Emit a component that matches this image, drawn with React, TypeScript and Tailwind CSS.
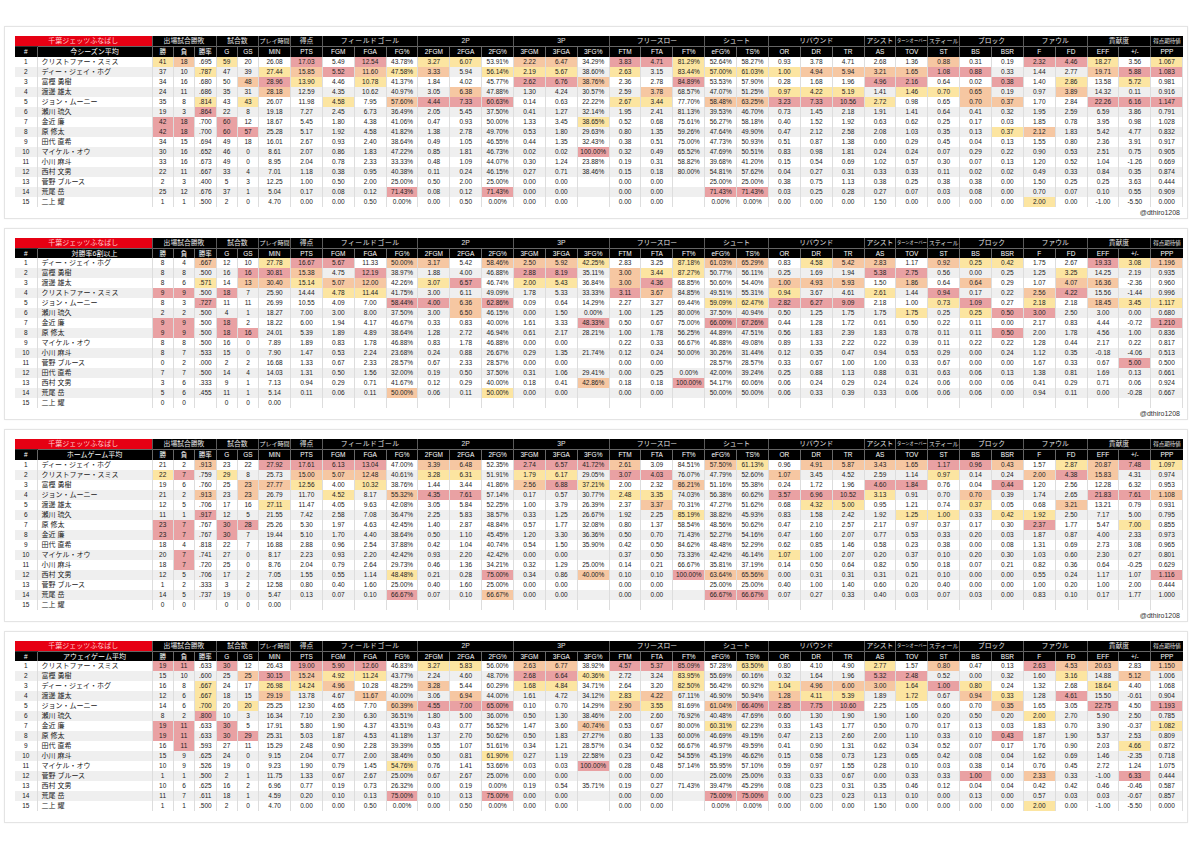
import React from "react";

type Hl = "r" | "o" | "y";

const HL: Record<Hl, string> = {
  r: "bg-[#e9a1a3]",
  o: "bg-[#f6c7a2]",
  y: "bg-[#fce5a1]",
};

const GROUPS: Array<{ label: string; span: number; cls?: string }> = [
  { label: "出場試合勝敗", span: 3 },
  { label: "試合数", span: 2 },
  { label: "プレイ時間", span: 1, cls: "text-[6px]" },
  { label: "得点", span: 1 },
  { label: "フィールドゴール", span: 3, cls: "text-[6.8px] tracking-[0.6px]" },
  { label: "2P", span: 3 },
  { label: "3P", span: 3 },
  { label: "フリースロー", span: 3 },
  { label: "シュート", span: 2 },
  { label: "リバウンド", span: 3 },
  { label: "アシスト", span: 1 },
  { label: "ターンオーバー", span: 1, cls: "text-[4.3px]" },
  { label: "スティール", span: 1, cls: "text-[6px]" },
  { label: "ブロック", span: 2 },
  { label: "ファウル", span: 2 },
  { label: "貢献度", span: 2 },
  { label: "得点期待値", span: 1, cls: "text-[5.5px]" },
];

const COLS = [
  "勝", "負", "勝率", "G", "GS",
  "MIN", "PTS", "FGM", "FGA", "FG%", "2FGM", "2FGA", "2FG%", "3FGM", "3FGA", "3FG%",
  "FTM", "FTA", "FT%", "eFG%", "TS%", "OR", "DR", "TR", "AS", "TOV", "ST", "BS", "BSR",
  "F", "FD", "EFF", "+/-", "PPP",
];

type Table = { sub: string; mark: boolean; rows: Array<[string, string]> };

const TABLES: Table[] = [
  {
    sub: "今シーズン平均",
    mark: true,
    rows: [
      ["クリストファー・スミス", "41y 18o .695 59y 20 26.08 17.03r 5.49 12.54r 43.78% 3.27y 6.07y 53.91% 2.22o 6.47o 34.29% 3.83r 4.71r 81.29%y 52.64% 58.27% 0.93 3.78 4.71 2.68 1.36 0.88o 0.31 0.19 2.32r 4.46r 18.27y 3.56 1.067y"],
      ["ディー・ジェイ・ホグ", "37 10 .787y 47 39 27.44y 15.85o 5.52r 11.60o 47.58%y 3.33o 5.94 56.14%y 2.19y 5.67y 38.60% 2.63y 3.15 83.44%y 57.00%y 61.03%y 1.00y 4.94o 5.94o 3.21o 1.65o 1.08r 0.88r 0.33 1.44 2.77 19.71o 5.88r 1.083r"],
      ["富樫 勇樹", "34 16 .680 50 48o 28.96r 13.90y 4.46 10.78y 41.37% 1.84 4.02 45.77% 2.62r 6.76r 38.76%o 2.36 2.78 84.89%r 53.53% 57.90% 0.28 1.68 1.96 4.96r 2.16r 0.64 0.02 0.38r 1.40 2.86y 13.58 5.72y 0.981"],
      ["渡邊 雄太", "24 11 .686 35 31 28.18o 12.59 4.35 10.62 40.97% 3.05 6.38o 47.88% 1.30 4.24 30.57% 2.59 3.78o 68.57% 47.07% 51.25% 0.97y 4.22y 5.19y 1.41 1.46y 0.70y 0.65o 0.19 0.97 3.89o 14.32 0.11 0.916"],
      ["ジョン・ムーニー", "35 8 .814y 43 43y 26.07 11.98 4.58y 7.95 57.60%o 4.44r 7.33r 60.63%r 0.14 0.63 22.22% 2.67y 3.44y 77.70% 58.48%o 63.25%o 3.23r 7.33r 10.56r 2.72y 0.98 0.65 0.70o 0.37o 1.70 2.84 22.26r 6.16r 1.147r"],
      ["瀬川 琉久", "19 3 .864r 22 8 19.18 7.27 2.45 6.73 36.49% 2.05 5.45 37.50% 0.41 1.27 32.14% 1.95 2.41 81.13% 39.53% 46.70% 0.73 1.45 2.18 1.91 1.41 0.64 0.41 0.32 1.95 2.59 6.59 3.86 0.791"],
      ["金近 廉", "42r 18r .700 60r 12 18.67 5.45 1.80 4.38 41.06% 0.47 0.93 50.00% 1.33 3.45 38.65%y 0.52 0.68 75.61% 56.27% 58.18% 0.40 1.52 1.92 0.63 0.62 0.25 0.17 0.03 1.85 0.78 3.95 0.98 1.028"],
      ["原 修太", "42r 18r .700 60r 57r 25.28 5.17 1.92 4.58 41.82% 1.38 2.78 49.70% 0.53 1.80 29.63% 0.80 1.35 59.26% 47.64% 49.90% 0.47 2.12 2.58 2.08 1.03 0.35 0.13 0.37y 2.12o 1.83 5.42 4.77 0.832"],
      ["田代 直希", "34 15 .694 49 18 16.01 2.67 0.93 2.40 38.64% 0.49 1.05 46.55% 0.44 1.35 32.43% 0.38 0.51 75.00% 47.73% 50.93% 0.51 0.87 1.38 0.60 0.29 0.45 0.04 0.13 1.55 0.80 2.36 3.91 0.917"],
      ["マイケル・オウ", "30 16 .652 46 0 8.61 2.07 0.86 1.83 47.22% 0.85 1.81 46.73% 0.02 0.02 100.00%r 0.32 0.49 65.52% 47.69% 50.51% 0.83 0.98 1.81 0.24 0.24 0.07 0.29 0.22 0.90 0.53 2.51 0.75 0.905"],
      ["小川 麻斗", "33 16 .673 49 0 8.95 2.04 0.78 2.33 33.33% 0.48 1.09 44.07% 0.30 1.24 23.88% 0.19 0.31 58.82% 39.68% 41.20% 0.15 0.54 0.69 1.02 0.57 0.30 0.07 0.13 1.20 0.52 1.04 -1.26 0.669"],
      ["西村 文男", "22 11 .667 33 4 7.01 1.18 0.38 0.95 40.38% 0.11 0.24 46.15% 0.27 0.71 38.46% 0.15 0.18 80.00% 54.81% 57.62% 0.04 0.27 0.31 0.33 0.33 0.11 0.02 0.02 0.49 0.33 0.84 0.35 0.874"],
      ["菅野 ブルース", "2 3 .400 5 3 12.25 1.00 0.50 2.00 25.00% 0.50 2.00 25.00% 0.00 0.00 _ 0.00 0.00 _ 25.00% 25.00% 0.38 0.75 1.13 0.38 0.25 0.38 0.38 0.00 1.50 0.25 0.25 3.63 0.444"],
      ["荒尾 岳", "25 12 .676 37 1 5.04 0.17 0.08 0.12 71.43%r 0.08 0.12 71.43%r 0.00 0.00 _ 0.00 0.00 _ 71.43%r 71.43%r 0.03 0.25 0.28 0.27 0.07 0.03 0.08 0.00 0.70 0.07 0.10 0.55 0.909"],
      ["二上 耀", "1 1 .500 2 0 4.70 0.00 0.00 0.50 0.00% 0.00 0.50 0.00% 0.00 0.00 _ 0.00 0.00 _ 0.00% 0.00% 0.00 0.00 0.00 1.50 0.00 0.00 0.00 0.00 2.00y 0.00 -1.00 -5.50 0.000"],
    ],
  },
  {
    sub: "対勝率6割以上",
    mark: true,
    rows: [
      ["ディー・ジェイ・ホグ", "8 4 .667o 12 10 27.78y 16.67r 5.67r 11.33 50.00%o 3.17o 5.42 58.46%o 2.50o 5.92o 42.25%y 2.83 3.25 87.18%y 61.03%o 65.29%o 0.83 4.58y 5.42o 2.83o 1.17 0.92o 0.25y 0.42y 1.75 2.67 19.33r 3.08y 1.196o"],
      ["富樫 勇樹", "8 8 .500 16 16r 30.81r 15.38o 4.75 12.19r 38.97% 1.88 4.00 46.88% 2.88r 8.19r 35.11% 3.00o 3.44y 87.27%y 50.77% 56.11% 0.25 1.69 1.94 5.38r 2.75r 0.56 0.00 0.25 1.25 3.25y 14.25 2.19 0.935"],
      ["渡邊 雄太", "8 6 .571y 14 13o 30.40o 15.14y 5.07o 12.00o 42.26% 3.07y 6.57r 46.74% 2.00y 5.43y 36.84% 3.00o 4.36r 68.85% 50.60% 54.40% 1.00o 4.93o 5.93o 1.50 1.86o 0.64 0.64o 0.29 1.07 4.07o 16.36o -2.36 0.960"],
      ["クリストファー・スミス", "9r 9r .500 18r 7 25.90 14.44 4.78y 11.44y 41.75% 3.00 6.11 49.09% 1.78 5.33 33.33% 3.11r 3.67o 84.85% 49.51% 55.31% 0.94y 3.67 4.61 2.61y 1.44 0.94r 0.17 0.22 2.56o 4.22r 15.56 -1.44 0.996"],
      ["ジョン・ムーニー", "8 3 .727r 11 11 26.99 10.55 4.09 7.00 58.44%r 4.00r 6.36o 62.86%r 0.09 0.64 14.29% 2.27 3.27 69.44% 59.09%y 62.47%y 2.82r 6.27r 9.09r 2.18 1.00 0.73y 1.09r 0.27 2.18y 2.18 18.45o 3.45y 1.117y"],
      ["瀬川 琉久", "2 2 .500 4 1 18.27 7.00 3.00 8.00 37.50% 3.00 6.50o 46.15% 0.00 1.50 0.00% 1.00 1.25 80.00% 37.50% 40.94% 0.50 1.25 1.75 1.75 1.75y 0.25 0.25y 0.50r 3.00r 2.50 3.00 0.00 0.680"],
      ["金近 廉", "9r 9r .500 18r 2 18.22 6.00 1.94 4.17 46.67% 0.33 0.83 40.00% 1.61 3.33 48.33%r 0.50 0.67 75.00% 66.00%r 67.26%r 0.44 1.28 1.72 0.61 0.50 0.22 0.11 0.00 2.17 0.83 4.44 -0.72 1.210r"],
      ["原 修太", "9r 9r .500 18r 16r 24.01 5.39 1.89 4.89 38.64% 1.28 2.72 46.94% 0.61 2.17 28.21% 1.00 1.78 56.25% 44.89% 47.51% 0.56 1.83 2.39 1.83 0.78 0.11 0.11 0.50r 2.00 1.78 4.56 1.00 0.836"],
      ["マイケル・オウ", "8 8 .500 16 0 7.89 1.89 0.83 1.78 46.88% 0.83 1.78 46.88% 0.00 0.00 _ 0.22 0.33 66.67% 46.88% 49.08% 0.89 1.33 2.22 0.22 0.39 0.11 0.22 0.22 1.28 0.44 2.17 0.22 0.817"],
      ["小川 麻斗", "8 7 .533 15 0 7.90 1.47 0.53 2.24 23.68% 0.24 0.88 26.67% 0.29 1.35 21.74% 0.12 0.24 50.00% 30.26% 31.44% 0.12 0.35 0.47 0.94 0.53 0.29 0.00 0.24 1.12 0.35 -0.18 -4.06 0.513"],
      ["菅野 ブルース", "0 2 .000 2 2 16.68 1.33 0.67 2.33 28.57% 0.67 2.33 28.57% 0.00 0.00 _ 0.00 0.00 _ 28.57% 28.57% 0.33 0.67 1.00 1.00 0.33 0.67 0.00 0.00 1.67 0.33 0.67 5.00r 0.500"],
      ["田代 直希", "7 7 .500 14 4 14.03 1.31 0.50 1.56 32.00% 0.19 0.50 37.50% 0.31 1.06 29.41% 0.00 0.25 0.00% 42.00% 39.24% 0.25 0.88 1.13 0.88 0.31 0.63 0.06 0.13 1.38 0.81 1.69 0.13 0.661"],
      ["西村 文男", "3 6 .333 9 1 7.13 0.94 0.29 0.71 41.67% 0.12 0.29 40.00% 0.18 0.41 42.86%o 0.18 0.18 100.00%r 54.17% 60.06% 0.06 0.24 0.29 0.24 0.24 0.06 0.00 0.06 0.41 0.29 0.71 0.06 0.924"],
      ["荒尾 岳", "5 6 .455 11 1 5.14 0.11 0.06 0.11 50.00%o 0.06 0.11 50.00%y 0.00 0.00 _ 0.00 0.00 _ 50.00% 50.00% 0.06 0.33 0.39 0.33 0.06 0.06 0.06 0.00 0.94 0.11 0.00 -0.28 0.667"],
      ["二上 耀", "0 0 _ 0 0 0.00"],
    ],
  },
  {
    sub: "ホームゲーム平均",
    mark: true,
    rows: [
      ["ディー・ジェイ・ホグ", "21 2 .913o 23 22 27.92r 17.61r 6.13r 13.04r 47.00% 3.39o 6.48o 52.35% 2.74r 6.57r 41.72%r 2.61o 3.09 84.51% 57.50%o 61.13%y 0.96 4.91o 5.87o 3.43o 1.65o 1.17r 0.96r 0.43o 1.57 2.87y 20.87o 7.48r 1.097y"],
      ["クリストファー・スミス", "22y 7r .759 29y 8 25.73 15.00o 5.07o 12.48o 40.61% 3.28y 6.31y 51.91% 1.79y 6.17y 29.05% 3.07r 4.03r 76.07% 47.79% 52.60% 1.07o 3.45 4.52 2.59 1.14 0.97y 0.14 0.24 2.00o 4.38r 15.83o 4.31 0.974"],
      ["富樫 勇樹", "19 6 .760 25 23o 27.77o 12.56y 4.00 10.32y 38.76% 1.44 3.44 41.86% 2.56o 6.88r 37.21%y 2.00 2.32 86.21%o 51.16% 55.38% 0.24 1.72 1.96 4.60r 1.84r 0.76 0.04 0.44r 1.20 2.56 12.28 6.32 0.953"],
      ["ジョン・ムーニー", "21 2 .913o 23 23o 26.79 11.70 4.52y 8.17 55.32%o 4.35r 7.61r 57.14% 0.17 0.57 30.77% 2.48y 3.35y 74.03% 56.38% 60.62% 3.57r 6.96r 10.52r 3.13y 0.91 0.70 0.70o 0.39 1.74 2.65 21.83r 7.61r 1.108o"],
      ["渡邊 雄太", "12 5 .706 17 16 27.11y 11.47 4.05 9.63 42.08% 3.05 5.84 52.25% 1.00 3.79 26.39% 2.37 3.37o 70.31% 47.27% 51.62% 0.68 4.32y 5.00y 0.95 1.21 0.74 0.37y 0.05 0.68 3.21o 13.21 0.79 0.931"],
      ["瀬川 琉久", "11 1 .917r 12 5 21.55 7.42 2.58 7.08 36.47% 2.25 5.83 38.57% 0.33 1.25 26.67% 1.92 2.25 85.19%y 38.82% 45.93% 0.83 1.58 2.42 1.92 1.25y 1.00y 0.33 0.42y 1.92y 2.50 7.17 5.00 0.795"],
      ["原 修太", "23r 7r .767 30r 28r 25.26 5.30 1.97 4.63 42.45% 1.40 2.87 48.84% 0.57 1.77 32.08% 0.80 1.37 58.54% 48.56% 50.62% 0.47 2.10 2.57 2.17 0.97 0.37 0.17 0.30 2.37r 1.77 5.47 7.00y 0.855"],
      ["金近 廉", "23r 7r .767 30r 7 19.44 5.10 1.70 4.40 38.64% 0.50 1.10 45.45% 1.20 3.30 36.36% 0.50 0.70 71.43% 52.27% 54.16% 0.47 1.60 2.07 0.77 0.53 0.33 0.20 0.03 1.87 0.87 4.00 2.33 0.973"],
      ["田代 直希", "18 4 .818 22 7 16.88 2.88 0.96 2.54 37.88% 0.42 1.04 40.74% 0.54 1.50 35.90% 0.42 0.50 84.62% 48.48% 52.29% 0.62 0.85 1.46 0.58 0.23 0.38 0.00 0.08 1.31 0.69 2.73 3.08 0.965"],
      ["マイケル・オウ", "20 7r .741 27 0 8.17 2.23 0.93 2.20 42.42% 0.93 2.20 42.42% 0.00 0.00 _ 0.37 0.50 73.33% 42.42% 46.14% 1.07y 1.00 2.07 0.20 0.37 0.10 0.20 0.30 1.03 0.60 2.30 0.27 0.801"],
      ["小川 麻斗", "18 7r .720 25 0 8.76 2.04 0.79 2.64 29.73% 0.46 1.36 34.21% 0.32 1.29 25.00% 0.14 0.21 66.67% 35.81% 37.19% 0.14 0.50 0.64 0.82 0.50 0.18 0.07 0.21 0.82 0.36 0.64 -0.25 0.629"],
      ["西村 文男", "12 5 .706 17 2 7.05 1.55 0.55 1.14 48.48%y 0.21 0.28 75.00%r 0.34 0.86 40.00%o 0.10 0.10 100.00%r 63.64%o 65.56%o 0.00 0.31 0.31 0.31 0.21 0.10 0.00 0.00 0.55 0.24 1.17 1.07 1.116r"],
      ["菅野 ブルース", "1 2 .333 3 2 12.58 0.80 0.40 1.60 25.00% 0.40 1.60 25.00% 0.00 0.00 _ 0.00 0.00 _ 25.00% 25.00% 0.40 1.00 1.40 0.60 0.20 0.40 0.00 0.00 1.00 0.20 1.00 2.00 0.444"],
      ["荒尾 岳", "14 5 .737 19 0 5.47 0.13 0.07 0.10 66.67%r 0.07 0.10 66.67%o 0.00 0.00 _ 0.00 0.00 _ 66.67%r 66.67%r 0.07 0.27 0.33 0.40 0.03 0.07 0.03 0.00 0.83 0.10 0.17 1.77 1.000"],
      ["二上 耀", "0 0 _ 0 0 0.00"],
    ],
  },
  {
    sub: "アウェイゲーム平均",
    mark: false,
    rows: [
      ["クリストファー・スミス", "19r 11r .633 30r 12 26.43 19.00r 5.90r 12.60r 46.83% 3.27y 5.83y 56.00% 2.63o 6.77o 38.92% 4.57r 5.37r 85.09%r 57.28% 63.50%y 0.80 4.10 4.90 2.77y 1.57 0.80o 0.47 0.13 2.63r 4.53o 20.63o 2.83 1.150o"],
      ["富樫 勇樹", "15 10 .600 25 25o 30.15r 15.24o 4.92y 11.24y 43.77% 2.24 4.60 48.70% 2.68r 6.64r 40.36%y 2.72 3.24 83.95%y 55.69% 60.16% 0.32 1.64 1.96 5.32r 2.48r 0.52 0.00 0.32 1.60 3.16y 14.88 5.12o 1.006"],
      ["ディー・ジェイ・ホグ", "16 8 .667y 24 17 26.98y 14.24y 4.96o 10.28 48.25% 3.28o 5.44 60.29% 1.68y 4.84y 34.71% 2.64 3.20 82.50%y 56.42% 60.92% 1.04y 4.96o 6.00o 3.00o 1.64y 1.00r 0.80y 0.24 1.32 2.68 18.64y 4.40 1.068"],
      ["渡邊 雄太", "12 6 .667y 18 15 29.19o 13.78 4.67 11.67o 40.00% 3.06 6.94o 44.00% 1.61 4.72 34.12% 2.83y 4.22o 67.11% 46.90% 50.94% 1.28o 4.11y 5.39y 1.89 1.72y 0.67 0.94o 0.33y 1.28 4.61r 15.50 -0.61 0.904"],
      ["ジョン・ムーニー", "14 6 .700y 20 20y 25.25 12.30 4.65 7.70 60.39%o 4.55r 7.00r 65.00%r 0.10 0.70 14.29% 2.90o 3.55y 81.69% 61.04%o 66.40%r 2.85r 7.75r 10.60r 2.25 1.05 0.60 0.70 0.35o 1.65 3.05 22.75r 4.50 1.193r"],
      ["瀬川 琉久", "8 2 .800r 10 3 16.34 7.10 2.30 6.30 36.51% 1.80 5.00 36.00% 0.50 1.30 38.46% 2.00 2.60 76.92% 40.48% 47.69% 0.60 1.30 1.90 1.90 1.60 0.20 0.50 0.20 2.00y 2.70 5.90 2.50 0.785"],
      ["金近 廉", "19r 11r .633 30r 5 17.91 5.80 1.90 4.37 43.51% 0.43 0.77 56.52% 1.47 3.60 40.74%o 0.53 0.67 80.00% 60.31%y 62.23% 0.33 1.43 1.77 0.50 0.70 0.17 0.13 0.03 1.83 0.70 3.90 -0.37 1.082y"],
      ["原 修太", "19r 11r .633 30r 29r 25.31 5.03 1.87 4.53 41.18% 1.37 2.70 50.62% 0.50 1.83 27.27% 0.80 1.33 60.00% 46.69% 49.15% 0.47 2.13 2.60 2.00 1.10 0.33 0.10 0.43r 1.87 1.90 5.37 2.53 0.809"],
      ["田代 直希", "16 11r .593 27 11 15.29 2.48 0.90 2.28 39.39% 0.55 1.07 51.61% 0.34 1.21 28.57% 0.34 0.52 66.67% 46.97% 49.59% 0.41 0.90 1.31 0.62 0.34 0.52 0.07 0.17 1.76 0.90 2.03 4.66y 0.872"],
      ["小川 麻斗", "15 9 .625 24 0 9.15 2.04 0.77 2.00 38.46% 0.50 0.81 61.90%y 0.27 1.19 22.58% 0.23 0.42 54.55% 45.19% 46.62% 0.15 0.58 0.73 1.23 0.65 0.42 0.08 0.04 1.62 0.69 1.46 -2.35 0.718"],
      ["マイケル・オウ", "10 9 .526 19 0 9.23 1.90 0.79 1.45 54.76%y 0.76 1.41 53.66% 0.03 0.03 100.00%r 0.28 0.48 57.14% 55.95% 57.10% 0.59 0.97 1.55 0.28 0.10 0.03 0.38 0.14 0.76 0.45 2.72 1.24 1.075"],
      ["菅野 ブルース", "1 1 .500 2 1 11.75 1.33 0.67 2.67 25.00% 0.67 2.67 25.00% 0.00 0.00 _ 0.00 0.00 _ 25.00% 25.00% 0.33 0.33 0.67 0.00 0.33 0.33 1.00r 0.00 2.33o 0.33 -1.00 6.33r 0.444"],
      ["西村 文男", "10 6 .625 16 2 6.96 0.77 0.19 0.73 26.32% 0.00 0.19 0.00% 0.19 0.54 35.71% 0.19 0.27 71.43% 39.47% 45.29% 0.08 0.23 0.31 0.35 0.46 0.12 0.04 0.04 0.42 0.42 0.46 -0.46 0.587"],
      ["荒尾 岳", "11 7 .611 18 1 4.59 0.20 0.10 0.13 75.00%r 0.10 0.13 75.00%r 0.00 0.00 _ 0.00 0.00 _ 75.00%r 75.00%r 0.00 0.23 0.23 0.13 0.10 0.00 0.13 0.00 0.57 0.03 0.03 -0.67 0.857"],
      ["二上 耀", "1 1 .500 2 0 4.70 0.00 0.00 0.50 0.00% 0.00 0.50 0.00% 0.00 0.00 _ 0.00 0.00 _ 0.00% 0.00% 0.00 0.00 0.00 1.50 0.00 0.00 0.00 0.00 2.00y 0.00 -1.00 -5.50 0.000"],
    ],
  },
];

function parseCell(tok: string | undefined): { v: string; h: Hl | null } {
  if (!tok || tok === "_") return { v: "", h: null };
  const last = tok.slice(-1);
  if (last === "r" || last === "o" || last === "y") return { v: tok.slice(0, -1), h: last };
  return { v: tok, h: null };
}

function StatTable({ table }: { table: Table }) {
  return (
    <div className="ml-[4px] w-[1184px] border border-[#e4e4e4] bg-white pl-[10px] pr-[5px] pt-[9px] shadow-[0_0_2px_rgba(0,0,0,0.05)]">
      <table className="w-[1167.6px] table-fixed border-collapse">
        <colgroup>
          <col className="w-[22px]" />
          <col className="w-[115px]" />
          {COLS.map((c, i) => (
            <col key={c} className={i < 5 ? "w-[21.33px]" : "w-[31.86px]"} />
          ))}
        </colgroup>
        <thead>
          <tr className="h-[10px]">
            <th
              colSpan={2}
              className="bg-[#e60013] p-0 text-center text-[7px] font-normal leading-[10px] text-[#ffcccc]"
            >
              千葉ジェッツふなばし
            </th>
            {GROUPS.map((g) => (
              <th
                key={g.label}
                colSpan={g.span}
                className={`overflow-hidden whitespace-nowrap border-l border-[#5a5a5a] bg-black p-0 text-center font-normal leading-[10px] text-[#e6e6e6] ${g.cls ?? "text-[6.8px]"}`}
              >
                {g.label}
              </th>
            ))}
          </tr>
          <tr className="h-[10px]">
            <th className="border-t border-[#333] bg-black p-0 text-center text-[6.5px] font-normal leading-[9px] text-white">#</th>
            <th className="border-l border-t border-[#666] bg-black p-0 text-center text-[7px] font-normal leading-[9px] text-white">
              {table.sub}
            </th>
            {COLS.map((c) => (
              <th
                key={c}
                className="border-l border-t border-[#666] bg-black p-0 text-center text-[6.5px] font-normal leading-[9px] text-white"
              >
                {c}
              </th>
            ))}
          </tr>
        </thead>
        <tbody>
          {table.rows.map(([name, data], i) => {
            const toks = data.split(" ");
            const rowBg = i % 2 === 1 ? "bg-[#efefef]" : "bg-white";
            return (
              <tr key={i} className={`h-[10px] ${rowBg}`}>
                <td className="border-r border-[#dddddd] p-0 text-center text-[6.5px] leading-[10px] text-[#222]">{i + 1}</td>
                <td className="overflow-hidden whitespace-nowrap border-r border-[#dddddd] p-0 pl-[4px] text-left text-[7px] leading-[10px] text-[#222]">
                  {name}
                </td>
                {COLS.map((c, j) => {
                  const cell = parseCell(toks[j]);
                  return (
                    <td
                      key={c}
                      className={`overflow-hidden whitespace-nowrap border-r border-[#dddddd] p-0 text-center text-[6.5px] leading-[10px] text-[#222] ${cell.h ? HL[cell.h] : ""}`}
                    >
                      {cell.v}
                    </td>
                  );
                })}
              </tr>
            );
          })}
        </tbody>
      </table>
      <div className="h-[11px] pr-[2px] text-right text-[7px] leading-[11px] text-[#333]">
        {table.mark ? "@dthiro1208" : ""}
      </div>
    </div>
  );
}

export default function App() {
  return (
    <div
      className="flex min-h-[848px] w-[1200px] flex-col gap-[9px] bg-white pt-[26px]"
      style={{ fontFamily: '"Liberation Sans", "Noto Sans CJK JP", Arial, sans-serif' }}
    >
      {TABLES.map((t) => (
        <StatTable key={t.sub} table={t} />
      ))}
    </div>
  );
}
